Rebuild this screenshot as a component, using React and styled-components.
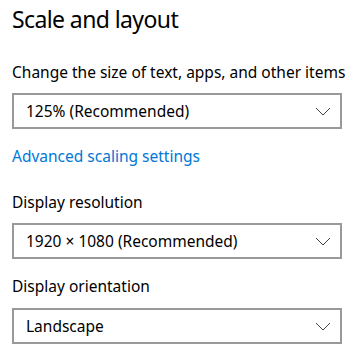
import React from "react";
import styled, { createGlobalStyle } from "styled-components";

const Global = createGlobalStyle`
  body {
    margin: 0;
    background: #fff;
    font-family: "Noto Sans", "Open Sans", sans-serif;
    color: #000;
  }
`;

const Page = styled.div`
  padding: 3px 12px 0 12px;
  width: 359px;
  box-sizing: border-box;
`;

const Title = styled.h1`
  margin: 0;
  font-size: 23px;
  font-weight: 400;
  line-height: 32px;
  letter-spacing: -0.6px;
`;

const Label = styled.div`
  font-size: 15.5px;
  line-height: 20px;
  margin-top: ${(p) => p.$top}px;
`;

const LinkText = styled.a`
  display: block;
  font-size: 15.5px;
  line-height: 20px;
  color: #0078d7;
  text-decoration: none;
  margin-top: 17px;
`;

const Select = styled.div`
  box-sizing: border-box;
  width: 330px;
  height: 36px;
  margin-top: ${(p) => p.$top}px;
  border: 2px solid #999;
  display: flex;
  align-items: center;
  justify-content: space-between;
  padding: 0 9px 0 12px;
  font-size: 15.5px;
`;

const Chevron = () => (
  <svg width="16" height="9" viewBox="0 0 16 9">
    <path d="M1 1 L8 8 L15 1" fill="none" stroke="#444" strokeWidth="1" />
  </svg>
);

export default function App() {
  return (
    <Page>
      <Global />
      <Title>Scale and layout</Title>
      <Label $top={27}>Change the size of text, apps, and other items</Label>
      <Select $top={11}>
        <span>125% (Recommended)</span>
        <Chevron />
      </Select>
      <LinkText href="#">Advanced scaling settings</LinkText>
      <Label $top={26}>Display resolution</Label>
      <Select $top={11}>
        <span>1920 × 1080 (Recommended)</span>
        <Chevron />
      </Select>
      <Label $top={17}>Display orientation</Label>
      <Select $top={12}>
        <span>Landscape</span>
        <Chevron />
      </Select>
    </Page>
  );
}
